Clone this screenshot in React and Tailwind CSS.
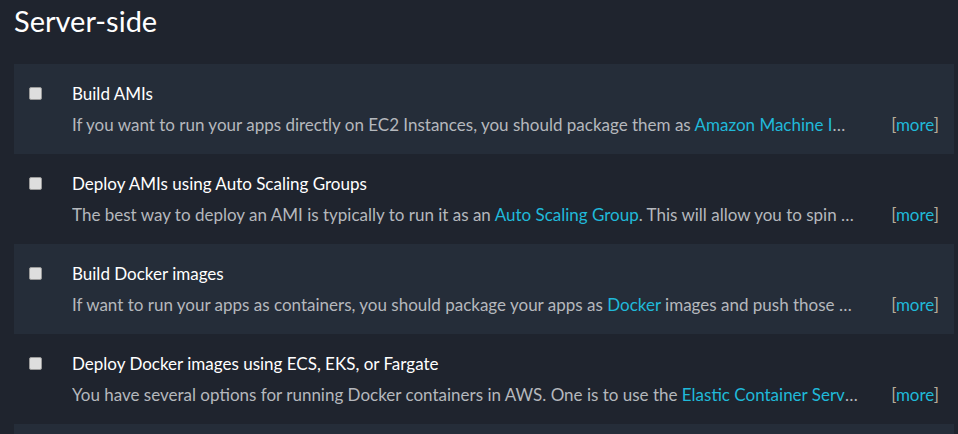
const items = [
    {
        title: 'Build AMIs',
        before: 'If you want to run your apps directly on EC2 Instances, you should package them as ',
        link: 'Amazon Machine Images (AMIs)',
        after: ' using a tool such as Packer, so that every server you launch starts from a known image.',
    },
    {
        title: 'Deploy AMIs using Auto Scaling Groups',
        before: 'The best way to deploy an AMI is typically to run it as an ',
        link: 'Auto Scaling Group',
        after: '. This will allow you to spin up multiple EC2 Instances that run your AMI and replace them automatically.',
    },
    {
        title: 'Build Docker images',
        before: 'If want to run your apps as containers, you should package your apps as ',
        link: 'Docker',
        after: ' images and push those Docker images to a Docker registry such as ECR.',
    },
    {
        title: 'Deploy Docker images using ECS, EKS, or Fargate',
        before: 'You have several options for running Docker containers in AWS. One is to use the ',
        link: 'Elastic Container Service (ECS)',
        after: ', where you run a cluster of EC2 Instances and ECS schedules containers on them.',
    },
    {
        title: 'Deploy serverless apps using AWS Lambda',
        before: 'If you want to run your apps without managing any servers, you can use ',
        link: 'AWS Lambda',
        after: ', which runs your code in response to events.',
    },
]

const Row = ({ item, index }) => (
    <div className={`flex h-[90px] px-[15px] pt-[18px] ${index % 2 === 0 ? 'bg-[#252d39]' : 'bg-[#1f242e]'}`}>
        <div className="w-[13px] h-[13px] mt-[5px] shrink-0 rounded-[2px] border border-[#9a9a9a] bg-[#dedede]"></div>
        <div className="ml-[30px] flex-1 min-w-0">
            <div className="text-white text-[17px] leading-6">{item.title}</div>
            <div className="mt-[7px] flex items-center text-[17px] leading-6">
                <div className="flex-1 min-w-0 truncate text-[#b5b8bd]">
                    {item.before}
                    <a className="text-[#20b9d9]">{item.link}</a>
                    {item.after}
                </div>
                <div className="ml-[33px] shrink-0 text-[#b8ad9a]">
                    [<a className="text-[#20b9d9]">more</a>]
                </div>
            </div>
        </div>
    </div>
)

export default function App() {
    return (
        <div className="w-[958px] h-[434px] overflow-hidden bg-[#1f242e] px-[14px] pt-[4px]" style={{ fontFamily: 'Lato, "Open Sans", sans-serif' }}>
            <h1 className="text-white text-[29px] leading-[34px] font-normal">Server-side</h1>
            <div className="mt-[26px] mr-[-10px]">
                {items.map((item, i) => (
                    <Row key={item.title} item={item} index={i} />
                ))}
            </div>
        </div>
    )
}
